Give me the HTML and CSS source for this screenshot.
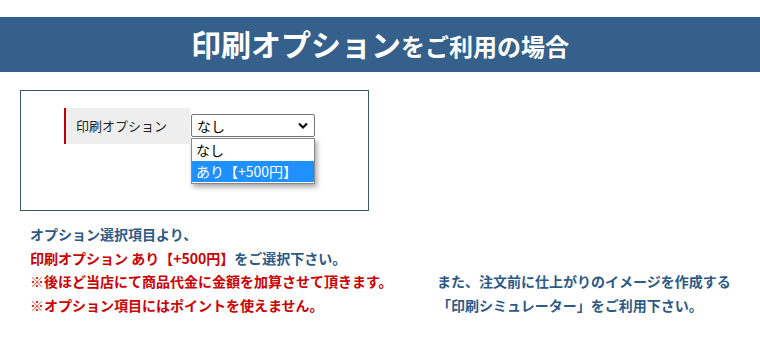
FILE: index.html
```html
<!DOCTYPE html>
<html lang="ja">
<head>
  <meta charset="UTF-8" />
  <title>印刷オプションをご利用の場合</title>
  <link rel="stylesheet" href="styles.css">
</head>
<body>
  <h2 class="title"><span class="big">印刷オプション</span>をご利用の場合</h2>

  <div class="option-box">
    <div class="option-row">
      <div class="option-label">印刷オプション</div>
      <div class="option-field">
        <div class="fake-select">
          <span>なし</span>
          <svg width="10" height="8" viewBox="0 0 10 8"><path d="M1 1.5 L5 5.5 L9 1.5" fill="none" stroke="#111" stroke-width="2.2"/></svg>
        </div>
        <ul class="dropdown">
          <li>なし</li>
          <li class="active">あり【+500円】</li>
        </ul>
      </div>
    </div>
  </div>

  <div class="notes">
    <div class="notes-left">
      <p class="blue">オプション選択項目より、</p>
      <p><span class="red">印刷オプション あり【+500円】</span><span class="blue">をご選択下さい。</span></p>
      <p class="red">※後ほど当店にて商品代金に金額を加算させて頂きます。</p>
      <p class="red">※オプション項目にはポイントを使えません。</p>
    </div>
    <div class="notes-right">
      <p class="blue">また、注文前に仕上がりのイメージを作成する</p>
      <p class="blue">「印刷シミュレーター」をご利用下さい。</p>
    </div>
  </div>
</body>
</html>
```

FILE: styles.css
```css
body {
  margin: 0;
  padding: 17px 0 0;
  background: #fff;
  font-family: "Noto Sans CJK JP", "Noto Sans", sans-serif;
  color: #222;
}
.title {
  margin: 0;
  height: 55px;
  background: #35608b;
  color: #fff;
  text-align: center;
  font-size: 24px;
  font-weight: bold;
  line-height: 53px;
}
.title .big {
  font-size: 30px;
}
.option-box {
  margin: 18px 0 0 20px;
  width: 349px;
  height: 121px;
  border: 1px solid #3c5a66;
  box-sizing: border-box;
  padding-top: 17px;
  padding-left: 43px;
}
.option-row {
  display: flex;
  align-items: flex-start;
}
.option-label {
  width: 114px;
  height: 36px;
  background: #eeeeee;
  border-left: 2px solid #c00000;
  padding-left: 10px;
  font-size: 13px;
  line-height: 36px;
  color: #222;
}
.option-field {
  position: relative;
  margin-left: 1px;
  margin-top: 6px;
}
.fake-select {
  width: 124px;
  height: 23px;
  box-sizing: border-box;
  border: 1px solid #767676;
  border-radius: 2px;
  background: #fff;
  display: flex;
  align-items: center;
  justify-content: space-between;
  padding: 0 6px 0 5px;
  font-size: 14px;
  color: #000;
}
.dropdown {
  position: absolute;
  left: 0;
  top: 24px;
  width: 124px;
  margin: 0;
  padding: 1px 0;
  list-style: none;
  background: #fff;
  border: 1px solid #888;
  box-sizing: border-box;
  box-shadow: 2px 3px 5px rgba(0,0,0,0.35);
  font-size: 14px;
  color: #000;
}
.dropdown li {
  height: 21px;
  line-height: 21px;
  padding-left: 4px;
}
.dropdown li.active {
  background: #1e90ff;
  color: #fff;
}
.notes {
  display: flex;
  align-items: flex-end;
  margin: 12px 0 0 30px;
  font-size: 14px;
  font-weight: bold;
}
.notes p {
  margin: 0;
  line-height: 23.7px;
}
.notes-left {
  width: 407px;
}
.blue {
  color: #2d5a85;
}
.red {
  color: #cc0000;
}
```
